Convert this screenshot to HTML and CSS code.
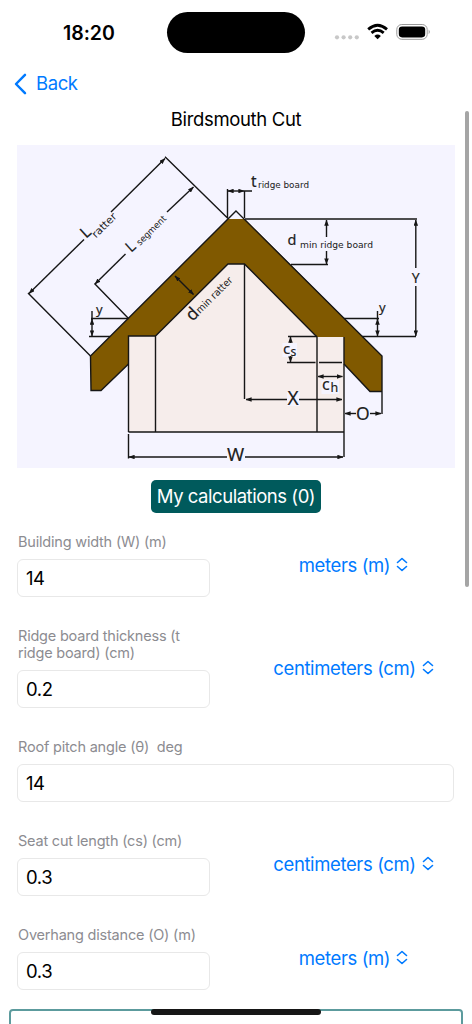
FILE: index.html
```html
<!DOCTYPE html>
<html lang="en">
<head>
<meta charset="utf-8">
<title>Birdsmouth Cut</title>
<link rel="stylesheet" href="styles.css">
</head>
<body>
<div class="screen">
  <header class="status">
    <span class="time">18:20</span>
    <span class="island"></span>
    <svg class="indicators" viewBox="0 0 98 20" width="98" height="20">
      <g fill="#c8c8c8"><circle cx="4" cy="14.300" r="2.100"/><circle cx="10.600" cy="14.300" r="2.100"/><circle cx="17.200" cy="14.300" r="2.100"/><circle cx="23.800" cy="14.300" r="2.100"/></g>
      <g fill="none" stroke="#000" stroke-width="2.800"><path d="M35.200 6.400Q44.600-1.800 54 6.400"/><path d="M38.500 9.900Q44.600 4.700 50.700 9.900"/></g>
      <path d="M41.300 12.900Q44.600 10.200 47.900 12.900L44.600 16.200Z"/>
      <rect x="63.800" y="1.500" width="30.400" height="14.800" rx="5" fill="none" stroke="#999"/>
      <rect x="65.800" y="3.400" width="26.400" height="11" rx="3.300"/>
      <path d="M95.700 6.600Q97.900 8.900 95.700 11.200Z" fill="#999"/>
    </svg>
  </header>
  <nav class="nav">
    <svg viewBox="0 0 13 22" width="13" height="22"><path d="M11 1.800 2 11l9 9.200" fill="none" stroke="#007aff" stroke-width="2.500" stroke-linecap="round" stroke-linejoin="round"/></svg>
    <span class="back">Back</span>
  </nav>
  <main class="content">
    <h1 class="title"><span>Birdsmouth Cut</span></h1>
    <svg class="diagram" viewBox="17 145 438 323" width="438" height="323">
      <defs>
        <marker id="arrow" viewBox="0 0 8 6" refX="7.500" refY="3" markerWidth="6" markerHeight="4.500" markerUnits="userSpaceOnUse" orient="auto-start-reverse"><path d="M0 0 8 3 0 6Z" fill="#161616"/></marker>
      </defs>
      <path d="M17 145h438v323H17z" fill="#f5f4ff"/>
      <path d="M128.500 336H155.500L228 264H244.500L317 337H344V432H128.500Z" fill="#f6edeb"/>
      <path d="M228 219 90.500 356 91 390.500H101L128.500 364V336H155.500L228 264H244.500L317 337H344V364L370 391.500H382V356L245 219Z" fill="#805900"/>
      <path d="M282.500 343H297V357H282.500ZM287 392H300V406H287ZM321.500 380H339V394H321.500Z" fill="#f5f4ff"/>
      <g class="line">
        <path d="M128.500 432V336H155.500L228 264H244.500L317 337V432M155.500 336V432M344 337V457M128.500 432H344M128.500 434V458.500"/>
        <path d="M128.500 364 101 390.500H91L90.500 356 236 211 382 356V414M382 391.500H370L344 364"/>
        <path d="M165 156.700 228 218.500M28 293 90.500 356M94.500 283.500 128.500 318.500M227.500 189V218M244.500 191V218"/>
        <path d="M245 219H417M291 264.500H328M344 318.500H379M362 336.500H416M91 318.500H128.500M89 336.500H110M244.500 264V399M288 336.500H317M287 362.500H315.500M319 362.500H342M92 311V320M377.500 311V320M244 191H252"/>
      </g>
      <g class="line dimension">
        <path marker-end="url(#arrow)" d="M111 212 165 158.500"/>
        <path marker-end="url(#arrow)" d="M84 239.500 29 293.500"/>
        <path marker-end="url(#arrow)" d="M167 212 193.500 187"/>
        <path marker-end="url(#arrow)" d="M125.500 254 95 284"/>
        <path marker-end="url(#arrow)" d="M326.500 237V220"/><path marker-end="url(#arrow)" d="M326.500 251V264"/>
        <path marker-end="url(#arrow)" d="M415.800 268V220"/><path marker-end="url(#arrow)" d="M415.800 286V336"/>
        <path marker-end="url(#arrow)" d="M227 457H129"/><path marker-end="url(#arrow)" d="M245 457H343"/>
        <path marker-end="url(#arrow)" d="M287 399.500H246"/><path marker-end="url(#arrow)" d="M299 399.500H342"/>
        <path marker-end="url(#arrow)" d="M290.500 343V337"/><path marker-end="url(#arrow)" d="M290.500 356V362"/>
        <path marker-end="url(#arrow)" d="M356 413.500H345"/><path marker-end="url(#arrow)" d="M370 413.500H381"/>
        <path class="both" d="M318 376.500H342.500"/><path class="both" d="M228 191H244"/>
        <path class="both" d="M92 319V336"/><path class="both" d="M377.500 319V336"/><path class="both" d="M175 276 193.500 294.500"/>
      </g>
      <g class="labels">
        <text x="251" y="186.500" font-size="15.500">t</text><text class="sub" x="258" y="188" font-size="9.300" textLength="51" lengthAdjust="spacingAndGlyphs">ridge board</text>
        <text x="287.500" y="245" font-size="14.500">d</text><text class="sub" x="300" y="248" font-size="9.300" textLength="73" lengthAdjust="spacingAndGlyphs">min ridge board</text>
        <text x="411.700" y="282.500" font-size="14">Y</text>
        <text x="96" y="314" font-size="13">y</text><text x="379" y="311.500" font-size="13">y</text>
        <text x="227" y="460.500" font-size="18.500">W</text><text x="287.500" y="405" font-size="19">X</text><text x="356" y="419.500" font-size="17.500">O</text>
        <text x="283" y="354" font-size="15">c</text><text x="290.500" y="356" font-size="12">s</text>
        <text x="322" y="389.500" font-size="16">c</text><text x="330.500" y="392" font-size="12.500">h</text>
        <text transform="translate(86 239) rotate(-42)" font-size="16">L</text>
        <text class="sub" transform="translate(96 238.500) rotate(-45)" font-size="10.500" textLength="30" lengthAdjust="spacingAndGlyphs">ratter</text>
        <text transform="translate(131 253) rotate(-42)" font-size="15">L</text>
        <text class="sub" transform="translate(140 246) rotate(-45)" font-size="9" textLength="38" lengthAdjust="spacingAndGlyphs">segment</text>
        <text transform="translate(192.500 322) rotate(-45)" font-size="17.500">d</text>
        <text class="sub" transform="translate(200 314) rotate(-45)" font-size="10" textLength="47" lengthAdjust="spacingAndGlyphs">min ratter</text>
      </g>
    </svg>
    <button class="saved"><span>My calculations (0)</span></button>
    <form class="form">
      <div class="row">
        <label class="field"><span class="label">Building width (W) (m)</span><input class="input" value="14"></label>
        <span class="unit"><span>meters (m)</span><svg viewBox="0 0 12 16" width="12" height="16"><path d="m1.500 6 4.500-4 4.500 4M1.500 10l4.500 4 4.500-4"/></svg></span>
      </div>
      <div class="row">
        <label class="field"><span class="label">Ridge board thickness (t<br>ridge board) (cm)</span><input class="input" value="0.2"></label>
        <span class="unit"><span>centimeters (cm)</span><svg viewBox="0 0 12 16" width="12" height="16"><path d="m1.500 6 4.500-4 4.500 4M1.500 10l4.500 4 4.500-4"/></svg></span>
      </div>
      <div class="row">
        <label class="field wide"><span class="label">Roof pitch angle (θ)&nbsp; deg</span><input class="input" value="14"></label>
      </div>
      <div class="row">
        <label class="field"><span class="label">Seat cut length (cs) (cm)</span><input class="input" value="0.3"></label>
        <span class="unit"><span>centimeters (cm)</span><svg viewBox="0 0 12 16" width="12" height="16"><path d="m1.500 6 4.500-4 4.500 4M1.500 10l4.500 4 4.500-4"/></svg></span>
      </div>
      <div class="row">
        <label class="field"><span class="label">Overhang distance (O) (m)</span><input class="input" value="0.3"></label>
        <span class="unit"><span>meters (m)</span><svg viewBox="0 0 12 16" width="12" height="16"><path d="m1.500 6 4.500-4 4.500 4M1.500 10l4.500 4 4.500-4"/></svg></span>
      </div>
    </form>
    <section class="next-card"></section>
  </main>
  <i class="scrollbar"></i>
  <i class="home"></i>
</div>
</body>
</html>
```
FILE: styles.css
```css
* { box-sizing: border-box; }
body { margin: 0; background: #fff; font-family: Inter, "Liberation Sans", sans-serif; }
.screen { position: relative; width: 472px; height: 1024px; overflow: hidden; }
.status { display: flex; height: 65px; padding: 12px 0 0 63px; align-items: flex-start; }
.time { width: 104px; font-size: 19.500px; font-weight: 600; line-height: 42px; letter-spacing: -.05px; }
.island { width: 138px; height: 41px; border-radius: 21px; background: #000; }
.indicators { margin: 11px 0 0 28px; }
.nav { display: flex; height: 37px; align-items: center; gap: 9px; padding-left: 14px; color: #007aff; font-size: 18.500px; letter-spacing: -.4px; }
.back { margin-top: -1px; }
.content { display: flex; flex-direction: column; }
.title { height: 43px; margin: 0; text-align: center; font-size: 18.500px; font-weight: 400; line-height: 34px; letter-spacing: -.35px; }
.diagram { display: block; margin-left: 17px; }
.line { fill: none; stroke: #161616; stroke-width: 1.400; }
.dimension path.both { marker-start: url(#arrow); marker-end: url(#arrow); }
.labels { fill: #202020; stroke: #202020; stroke-width: .15; font-family: "Noto Sans", sans-serif; }
.labels .sub { stroke: none; font-family: "DejaVu Sans", sans-serif; }
.saved { align-self: center; width: 170px; height: 33px; margin-top: 12px; padding: 0; border: 0; border-radius: 5px; background: #005a5c; color: #fff; font: 18.500px/33px Inter, sans-serif; letter-spacing: -.46px; white-space: nowrap; }
.form { display: flex; flex-direction: column; gap: 30px; padding: 20px 18px 0 17px; }
.row { display: flex; align-items: center; }
.field { display: flex; flex-direction: column; gap: 9px; width: 193px; flex: none; }
.field.wide { width: 437px; }
.label { padding: 0 0 0 1px; color: #8c8c91; font-size: 14.500px; line-height: 17px; letter-spacing: -.2px; white-space: nowrap; }
.input { width: 100%; height: 38px; padding: 0 8px; border: 1px solid #e8e8e8; border-radius: 6px; background: #fff; font: 18.500px Inter, sans-serif; letter-spacing: -.4px; color: #000; }
.unit { display: flex; flex: 1; align-items: center; justify-content: center; gap: 6px; padding-left: 43px; color: #007aff; font-size: 18.500px; white-space: nowrap; letter-spacing: -.38px; transform: translateY(-.5px); }
.unit svg { fill: none; stroke: #007aff; stroke-width: 1.600; stroke-linecap: round; stroke-linejoin: round; }
.next-card { height: 60px; margin: 19px 9px 0; border: 2px solid #5c9b9d; border-radius: 4px; }
.scrollbar { position: absolute; right: 3px; top: 111px; width: 4px; height: 476px; border-radius: 2px; background: #a5a5a5; }
.home { position: absolute; left: 151px; top: 1009px; width: 170px; height: 6px; border-radius: 3px; background: #161616; }
```
